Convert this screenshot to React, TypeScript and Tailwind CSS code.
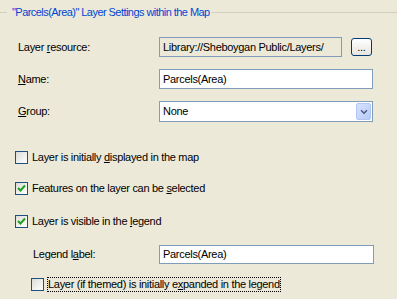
import { ChevronDown } from "lucide-react";

function CheckBox({ checked }: { checked: boolean }) {
  return (
    <span className="flex h-[13px] w-[13px] shrink-0 items-center justify-center border border-[#1C5180] bg-gradient-to-br from-[#DCDCD7] to-white">
      {checked && (
        <svg width="9" height="9" viewBox="0 0 9 9">
          <path d="M1 4 L3.5 6.5 L8 1.5" stroke="#21A121" strokeWidth="2" fill="none" />
        </svg>
      )}
    </span>
  );
}

function CheckRow({
  checked,
  children,
  focused,
}: {
  checked: boolean;
  children: React.ReactNode;
  focused?: boolean;
}) {
  return (
    <div className="flex h-[13px] items-center">
      <CheckBox checked={checked} />
      <span
        className={
          focused
            ? "ml-[3px] border border-dotted border-black leading-[13px]"
            : "ml-[4px] leading-[13px]"
        }
      >
        {children}
      </span>
    </div>
  );
}

export default function App() {
  return (
    <div className="h-[299px] w-[397px] overflow-hidden bg-[#ECE9D8] text-[11px] tracking-[-0.3px] text-black [font-family:'Liberation_Sans',Arial,sans-serif]">
      {/* group box header */}
      <div className="flex h-[24px] items-center">
        <div className="h-px w-[7px] bg-[#D0D0BF]" />
        <span className="ml-[5px] mr-[2px] tracking-[-0.55px] text-[#0046D5]">
          "Parcels(Area)" Layer Settings within the Map
        </span>
        <div className="h-px flex-1 bg-[#D0D0BF]" />
      </div>

      <div className="flex flex-col pl-[15px]">
        {/* Layer resource */}
        <div className="mt-[13px] flex h-[20px] items-center">
          <span className="w-[144px] pl-[3px]">
            Layer <u>r</u>esource:
          </span>
          <div className="flex h-[20px] w-[183px] items-center border border-[#7F9DB9] px-[3px]">
            Library://Sheboygan Public/Layers/
          </div>
          <button className="ml-[9px] flex h-[18px] w-[21px] items-end justify-center rounded-[3px] border border-[#003C74] bg-gradient-to-b from-white to-[#E6E5DE] pb-[2px] leading-none">
            ...
          </button>
        </div>

        {/* Name */}
        <div className="mt-[12px] flex h-[20px] items-center">
          <span className="w-[144px] pl-[3px]">
            <u>N</u>ame:
          </span>
          <div className="flex h-[20px] w-[214px] items-center border border-[#7F9DB9] bg-white px-[3px]">
            Parcels(Area)
          </div>
        </div>

        {/* Group */}
        <div className="mt-[12px] flex h-[21px] items-center">
          <span className="w-[144px] pl-[3px]">
            <u>G</u>roup:
          </span>
          <div className="flex h-[21px] w-[214px] items-center justify-between border border-[#7F9DB9] bg-white pl-[3px] pr-px">
            <span>None</span>
            <span className="flex h-[17px] w-[15px] items-center justify-center rounded-[2px] border border-[#B1C6F7] bg-gradient-to-br from-[#D7E3FD] to-[#B5CAF7]">
              <ChevronDown className="h-[10px] w-[10px] text-[#4D6185]" strokeWidth={4} />
            </span>
          </div>
        </div>

        {/* Checkboxes */}
        <div className="mt-[29px]">
          <CheckRow checked={false}>
            Layer is initially <u>d</u>isplayed in the map
          </CheckRow>
        </div>
        <div className="mt-[18px]">
          <CheckRow checked>
            Features on the layer can be <u>s</u>elected
          </CheckRow>
        </div>
        <div className="mt-[20px]">
          <CheckRow checked>
            Layer is visible in the <u>l</u>egend
          </CheckRow>
        </div>

        {/* Legend label */}
        <div className="mt-[17px] flex h-[19px] items-center">
          <span className="w-[144px] pl-[18px]">
            Legend l<u>a</u>bel:
          </span>
          <div className="flex h-[19px] w-[215px] items-center border border-[#7F9DB9] bg-white px-[3px]">
            Parcels(Area)
          </div>
        </div>

        <div className="mt-[14px] pl-[16px]">
          <CheckRow checked={false} focused>
            Layer (if themed) is initially e<u>x</u>panded in the legend
          </CheckRow>
        </div>
      </div>
    </div>
  );
}
